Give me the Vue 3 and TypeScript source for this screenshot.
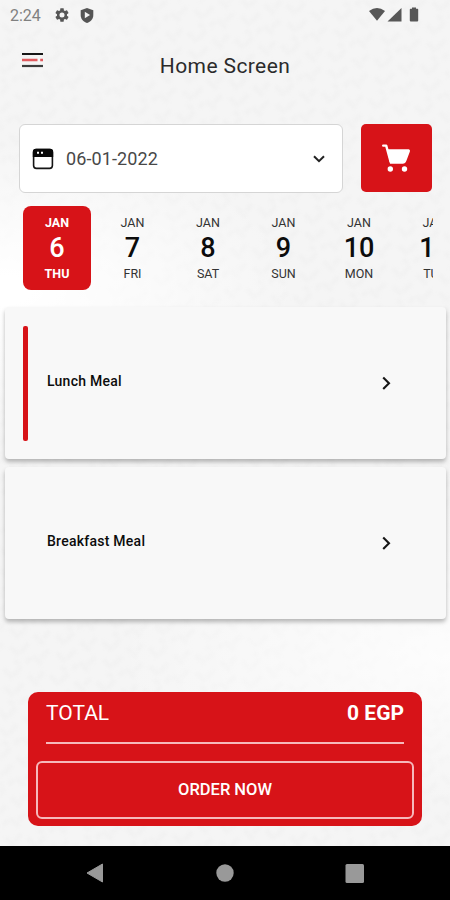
<script setup lang="ts">
import { ref } from 'vue'

interface Day {
  month: string
  date: number
  weekday: string
}

const days: Day[] = [
  { month: 'JAN', date: 6, weekday: 'THU' },
  { month: 'JAN', date: 7, weekday: 'FRI' },
  { month: 'JAN', date: 8, weekday: 'SAT' },
  { month: 'JAN', date: 9, weekday: 'SUN' },
  { month: 'JAN', date: 10, weekday: 'MON' },
  { month: 'JAN', date: 11, weekday: 'TUE' },
]
const meals: string[] = ['Lunch Meal', 'Breakfast Meal']

const selectedDay = ref(0)
const selectedMeal = ref(0)
</script>

<template>
  <div class="screen">
    <svg class="texture" aria-hidden="true">
      <defs>
        <pattern id="weave" width="47" height="41" patternUnits="userSpaceOnUse" patternTransform="rotate(8)">
          <path
            d="M3 6l10 8M20 1l-6 10M28 9l11 8M43 3l-5 8M6 24l10 7M24 18l-7 10M30 30l10 7M45 22l-7 9M12 37l6 3M24 38l4-6"
            stroke="#e6e6e6"
            stroke-width="5"
            fill="none"
          />
        </pattern>
      </defs>
      <rect width="100%" height="100%" fill="url(#weave)" />
    </svg>

    <div class="content">
      <div class="status">
        <span class="clock">2:24</span>
        <svg class="gear" width="16" height="16" viewBox="0 0 24 24">
          <path
            fill="#555"
            fill-rule="evenodd"
            d="M19.43 12.98c.04-.32.07-.64.07-.98s-.03-.66-.07-.98l2.11-1.65c.19-.15.24-.42.12-.64l-2-3.46c-.12-.22-.39-.3-.61-.22l-2.49 1c-.52-.4-1.08-.73-1.69-.98l-.38-2.65C14.46 2.18 14.25 2 14 2h-4c-.25 0-.46.18-.49.42l-.38 2.65c-.61.25-1.17.59-1.69.98l-2.49-1c-.23-.09-.49 0-.61.22l-2 3.46c-.13.22-.07.49.12.64l2.11 1.65c-.04.32-.07.65-.07.98s.03.66.07.98l-2.11 1.65c-.19.15-.24.42-.12.64l2 3.46c.12.22.39.3.61.22l2.49-1c.52.4 1.08.73 1.69.98l.38 2.65c.03.24.24.42.49.42h4c.25 0 .46-.18.49-.42l.38-2.65c.61-.25 1.17-.59 1.69-.98l2.49 1c.23.09.49 0 .61-.22l2-3.46c.12-.22.07-.49-.12-.64l-2.11-1.65zM12 15.800a3.800 3.800 0 1 1 0-7.600 3.800 3.800 0 0 1 0 7.600z"
          />
        </svg>
        <svg class="shield" width="14" height="15" viewBox="0 0 14 15">
          <path d="M7 0L13.3 2.3V7c0 3.8-2.6 6.8-6.3 8C3.3 13.8.7 10.8.7 7V2.3z" fill="#555" />
          <path d="M4.8 3.8l5.3 3.2-5.3 3.3z" fill="#f4f4f4" />
        </svg>
        <span class="spacer"></span>
        <svg width="52" height="16" viewBox="0 0 52 16" fill="#575757">
          <path d="M-1 4Q7-2 15 4L7 13.800z" />
          <path d="M17.500 14.500L31.500 1V14.500z" />
          <path d="M42 .5h4v1.200h1.500q.7 0 .7.700V13.500q0 1-1 1h-6.400q-1 0-1-1V2.400q0-.7.7-.7H42z" />
        </svg>
      </div>

      <header class="header">
        <svg class="menu" width="21" height="16" viewBox="0 0 21 16">
          <path d="M0 2H21" stroke="#161616" stroke-width="2" />
          <path d="M0 8H15.500M18.200 8H21" stroke="#e05a5e" stroke-width="2.400" />
          <path d="M0 14H21" stroke="#3c3c3c" stroke-width="2.200" />
        </svg>
        <h1>Home Screen</h1>
      </header>

      <div class="picker">
        <button class="date">
          <svg width="22" height="22" viewBox="0 0 22 22">
            <rect x="1.600" y="1.600" width="18.800" height="18.800" rx="2.800" fill="#fff" stroke="#151515" stroke-width="1.600" />
            <path d="M.8 9V4Q.8.700 4 .700H18Q21.200.700 21.200 4V9z" fill="#080808" />
            <path d="M5 4.800h2M9 4.800h2" stroke="#fff" stroke-width="2" />
          </svg>
          <span>06-01-2022</span>
          <svg class="down" width="12" height="8" viewBox="0 0 12 8">
            <path d="M1 1.200l5 5 5-5" fill="none" stroke="#222" stroke-width="2" />
          </svg>
        </button>
        <button class="cart">
          <svg width="30" height="28" viewBox="0 0 30 28">
            <path
              d="M1.200 1.600H4.200L8.500 17.500"
              fill="none"
              stroke="#fff"
              stroke-width="2.400"
              stroke-linecap="round"
              stroke-linejoin="round"
            />
            <path d="M5.300 5.300H26.700Q28.500 5.500 27.900 7.500L24.500 16.500Q23.300 19.800 20.800 19.800H8Z" fill="#fff" />
            <circle cx="8.300" cy="25" r="2.700" fill="#fff" />
            <circle cx="22.500" cy="25" r="2.700" fill="#fff" />
          </svg>
        </button>
      </div>

      <div class="days">
        <button
          v-for="(day, i) in days"
          :key="day.date"
          class="day"
          :class="{ active: i === selectedDay }"
          @click="selectedDay = i"
        >
          <span class="small">{{ day.month }}</span>
          <span class="number">{{ day.date }}</span>
          <span class="small">{{ day.weekday }}</span>
        </button>
      </div>

      <div class="meals">
        <button v-for="(meal, i) in meals" :key="meal" class="meal" @click="selectedMeal = i">
          <span class="marker" :class="{ on: i === selectedMeal }"></span>
          <span class="name">{{ meal }}</span>
          <svg width="9" height="14" viewBox="0 0 9 14">
            <path d="M1.200 1.400L7 7.200l-5.800 5.800" fill="none" stroke="#161616" stroke-width="2.100" />
          </svg>
        </button>
      </div>

      <section class="summary">
        <div class="total">
          <span class="label">TOTAL</span>
          <span class="amount">0 EGP</span>
        </div>
        <button class="order">ORDER NOW</button>
      </section>

      <nav class="nav">
        <svg width="18" height="20" viewBox="0 0 18 20"><path d="M1 10L16.500 1V19z" fill="#999" stroke="#999" stroke-linejoin="round" /></svg>
        <svg width="18" height="18" viewBox="0 0 18 18"><circle cx="9" cy="9" r="8.700" fill="#999" /></svg>
        <svg width="19" height="19" viewBox="0 0 19 19"><rect x=".5" width="18.500" height="19" rx="1.500" fill="#999" /></svg>
      </nav>
    </div>
  </div>
</template>

<style>
body {
  margin: 0;
}
</style>

<style scoped>
.screen {
  position: relative;
  width: 450px;
  height: 900px;
  overflow: hidden;
  background: #f5f5f5;
  font-family: Roboto, 'Liberation Sans', sans-serif;
  color: #0c0c0c;
}
.texture {
  position: absolute;
  inset: 0;
  width: 100%;
  height: 100%;
  opacity: 0.2;
  filter: blur(1.6px);
}
.content {
  position: relative;
  height: 100%;
  display: flex;
  flex-direction: column;
  background:
    radial-gradient(ellipse 300px 150px at 0 290px, #fff 10%, #fff0),
    radial-gradient(ellipse 340px 150px at 450px 655px, #fffc, #fff0);
}
button {
  border: 0;
  padding: 0;
  margin: 0;
  background: none;
  font: inherit;
  color: inherit;
}
svg {
  flex: none;
  display: block;
  overflow: visible;
}
.status {
  display: flex;
  align-items: center;
  height: 30px;
  padding: 0 28px 0 10px;
}
.clock {
  width: 44px;
  font-size: 16px;
  color: #808080;
}
.shield {
  margin-left: 10px;
}
.spacer {
  flex: 1;
}
.header {
  display: grid;
  grid-template-columns: 60px 1fr 60px;
  height: 94px;
}
.menu {
  margin: 22px 0 0 22px;
}
h1 {
  margin: 22px 0 0;
  font-size: 21px;
  line-height: 29px;
  font-weight: 400;
  letter-spacing: 0.4px;
  text-align: center;
  color: #2b2b2b;
}
.picker {
  display: flex;
  gap: 18px;
  height: 69px;
  padding: 0 18px 0 19px;
}
.date {
  flex: 1;
  box-sizing: border-box;
  display: flex;
  align-items: center;
  padding: 0 17px 0 12px;
  border: 1px solid #d5d5d5;
  border-radius: 6px;
  background: #fff;
  font-size: 18px;
  letter-spacing: 0.1px;
  color: #484848;
}
.date span {
  margin-left: 12px;
}
.down {
  margin-left: auto;
}
.cart {
  display: grid;
  place-items: center;
  width: 71px;
  height: 68px;
  border-radius: 5px;
  background: #d71318;
}
.days {
  display: flex;
  gap: 7.5px;
  width: 410px;
  height: 84px;
  margin: 13px 0 0 23px;
  overflow: hidden;
}
.day {
  flex: none;
  display: flex;
  flex-direction: column;
  align-items: center;
  box-sizing: border-box;
  width: 68px;
  height: 84px;
  padding-top: 8px;
  border-radius: 8px;
}
.small {
  font-size: 12.5px;
  line-height: 17px;
  color: #333;
}
.number {
  font-size: 27px;
  font-weight: 500;
  line-height: 34px;
}
.day.active {
  background: #d71318;
  color: #fff;
}
.active .small {
  font-weight: 700;
  color: #fff;
}
.meals {
  display: flex;
  flex-direction: column;
  gap: 8px;
  margin: 17px 4px 0 5px;
}
.meal {
  display: flex;
  align-items: center;
  box-sizing: border-box;
  height: 152px;
  padding: 0 55px 0 18px;
  border-radius: 4px;
  background: #f8f8f8;
  box-shadow: 0 3px 4px #0004;
}
.marker {
  width: 5px;
  height: 115px;
  border-radius: 2px;
}
.marker.on {
  background: #d71318;
}
.name {
  flex: 1;
  margin: -5px 0 0 19px;
  font-size: 14px;
  font-weight: 500;
  letter-spacing: 0.25px;
  text-align: left;
}
.summary {
  display: flex;
  flex-direction: column;
  box-sizing: border-box;
  height: 134px;
  margin: 73px 28px 0;
  padding: 0 8px 7px;
  border-radius: 10px;
  background: #d71318;
  color: #fff;
}
.total {
  display: flex;
  justify-content: space-between;
  box-sizing: border-box;
  height: 52px;
  margin: 0 10px 17px;
  padding-top: 8px;
  border-bottom: 2px solid #f6b9bb;
  font-size: 21px;
  line-height: 27px;
}
.amount {
  font-weight: 700;
}
.order {
  flex: 1;
  padding-bottom: 2px;
  border: 2px solid #f6b9bb;
  border-radius: 6px;
  font-size: 16.5px;
  font-weight: 500;
}
.nav {
  display: flex;
  align-items: center;
  justify-content: space-between;
  box-sizing: border-box;
  height: 54px;
  margin-top: auto;
  padding: 0 86px;
  background: #000;
}
</style>
